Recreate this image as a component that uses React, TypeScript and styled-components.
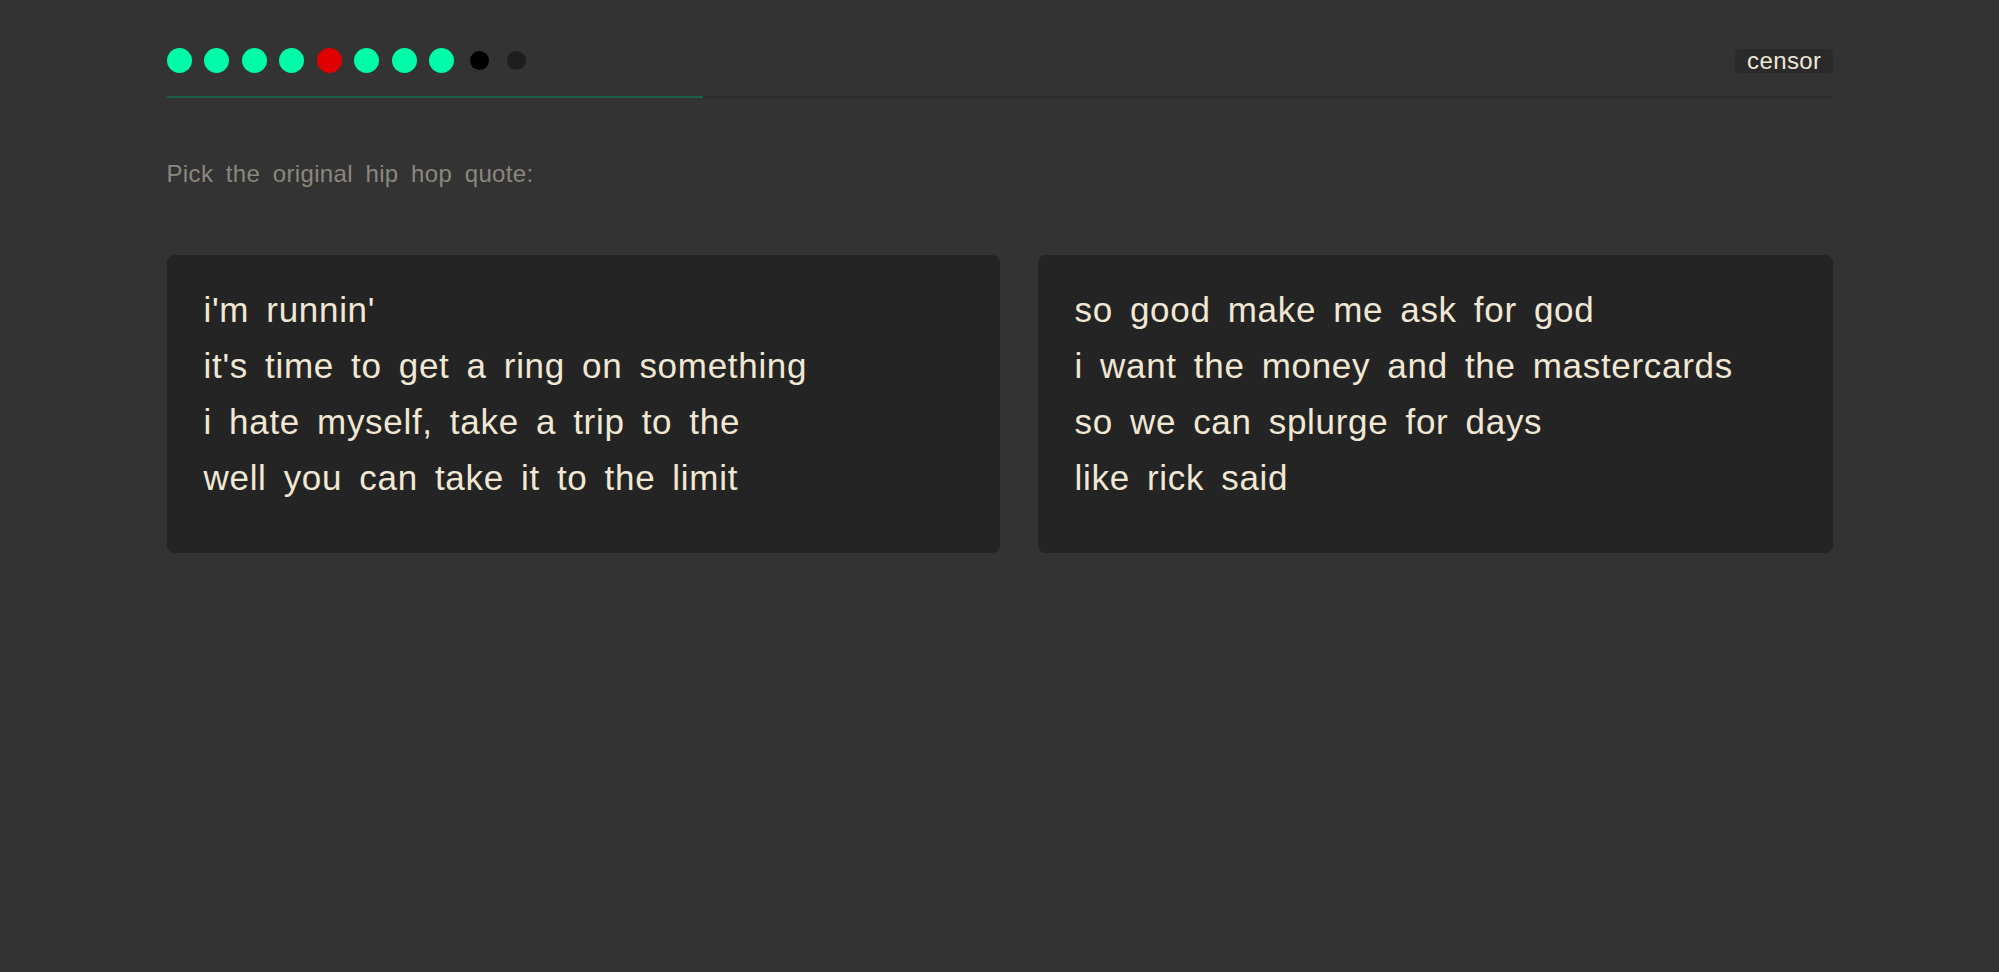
import React from "react";
import styled, { createGlobalStyle } from "styled-components";

const GlobalStyle = createGlobalStyle`
  html, body {
    margin: 0;
    padding: 0;
    background: #333333;
  }
  body {
    font-family: "Liberation Sans", Arial, Helvetica, sans-serif;
  }
`;

const Page = styled.div`
  width: 1666px;
  margin: 0 auto;
  min-height: 972px;
`;

const Header = styled.header`
  display: flex;
  flex-direction: column;
  padding-top: 48px;
`;

const HeaderRow = styled.div`
  display: flex;
  align-items: center;
  justify-content: space-between;
  height: 25px;
`;

const Dots = styled.div`
  display: flex;
  gap: 12.5px;
`;

const Slot = styled.div`
  width: 25px;
  height: 25px;
  display: flex;
  align-items: center;
  justify-content: center;
`;

const Dot = styled.span<{ $color: string; $size: number }>`
  display: block;
  width: ${(p) => p.$size}px;
  height: ${(p) => p.$size}px;
  border-radius: 50%;
  background: ${(p) => p.$color};
`;

const CensorButton = styled.button`
  border: none;
  background: #2a2a2a;
  color: #efe7d6;
  font-family: "Liberation Sans", Arial, sans-serif;
  font-size: 24px;
  line-height: 24px;
  height: 24px;
  padding: 0 11px 0 12px;
  letter-spacing: 0.4px;
  border-radius: 5px;
  cursor: pointer;
`;

const Track = styled.div`
  margin-top: 23px;
  height: 2px;
  background: #2c2c2c;
`;

const Fill = styled.div`
  height: 100%;
  background: #1f5f48;
`;

const Prompt = styled.p`
  margin: 62px 0 0 0;
  font-size: 24px;
  line-height: 28.8px;
  color: #8b877e;
  word-spacing: 0.23em;
  letter-spacing: 0.35px;
`;

const Choices = styled.div`
  display: grid;
  grid-template-columns: 833fr 795fr;
  gap: 38px;
  margin-top: 66px;
`;

const Card = styled.div`
  background: #242424;
  border-radius: 8px;
  padding: 27px 36px 47px 37px;
  cursor: pointer;
`;

const Line = styled.div`
  font-size: 35px;
  line-height: 56px;
  color: #f0e7d4;
  word-spacing: 0.19em;
  letter-spacing: 0.7px;
  white-space: nowrap;
`;

type DotState = "right" | "wrong" | "current" | "pending";

const dots: DotState[] = [
  "right",
  "right",
  "right",
  "right",
  "wrong",
  "right",
  "right",
  "right",
  "current",
  "pending",
];

const dotStyle: Record<DotState, { color: string; size: number }> = {
  right: { color: "#00fba9", size: 25 },
  wrong: { color: "#e10000", size: 25 },
  current: { color: "#000000", size: 19 },
  pending: { color: "#1e1e1e", size: 19 },
};

const quotes: string[][] = [
  [
    "i'm runnin'",
    "it's time to get a ring on something",
    "i hate myself, take a trip to the",
    "well you can take it to the limit",
  ],
  [
    "so good make me ask for god",
    "i want the money and the mastercards",
    "so we can splurge for days",
    "like rick said",
  ],
];

export default function App() {
  const progress = 32.2;
  return (
    <>
      <GlobalStyle />
      <Page>
        <Header>
          <HeaderRow>
            <Dots>
              {dots.map((d, i) => (
                <Slot key={i}>
                  <Dot $color={dotStyle[d].color} $size={dotStyle[d].size} />
                </Slot>
              ))}
            </Dots>
            <CensorButton>censor</CensorButton>
          </HeaderRow>
          <Track>
            <Fill style={{ width: `${progress}%` }} />
          </Track>
        </Header>
        <Prompt>Pick the original hip hop quote:</Prompt>
        <Choices>
          {quotes.map((q, i) => (
            <Card key={i}>
              {q.map((l, j) => (
                <Line key={j}>{l}</Line>
              ))}
            </Card>
          ))}
        </Choices>
      </Page>
    </>
  );
}
